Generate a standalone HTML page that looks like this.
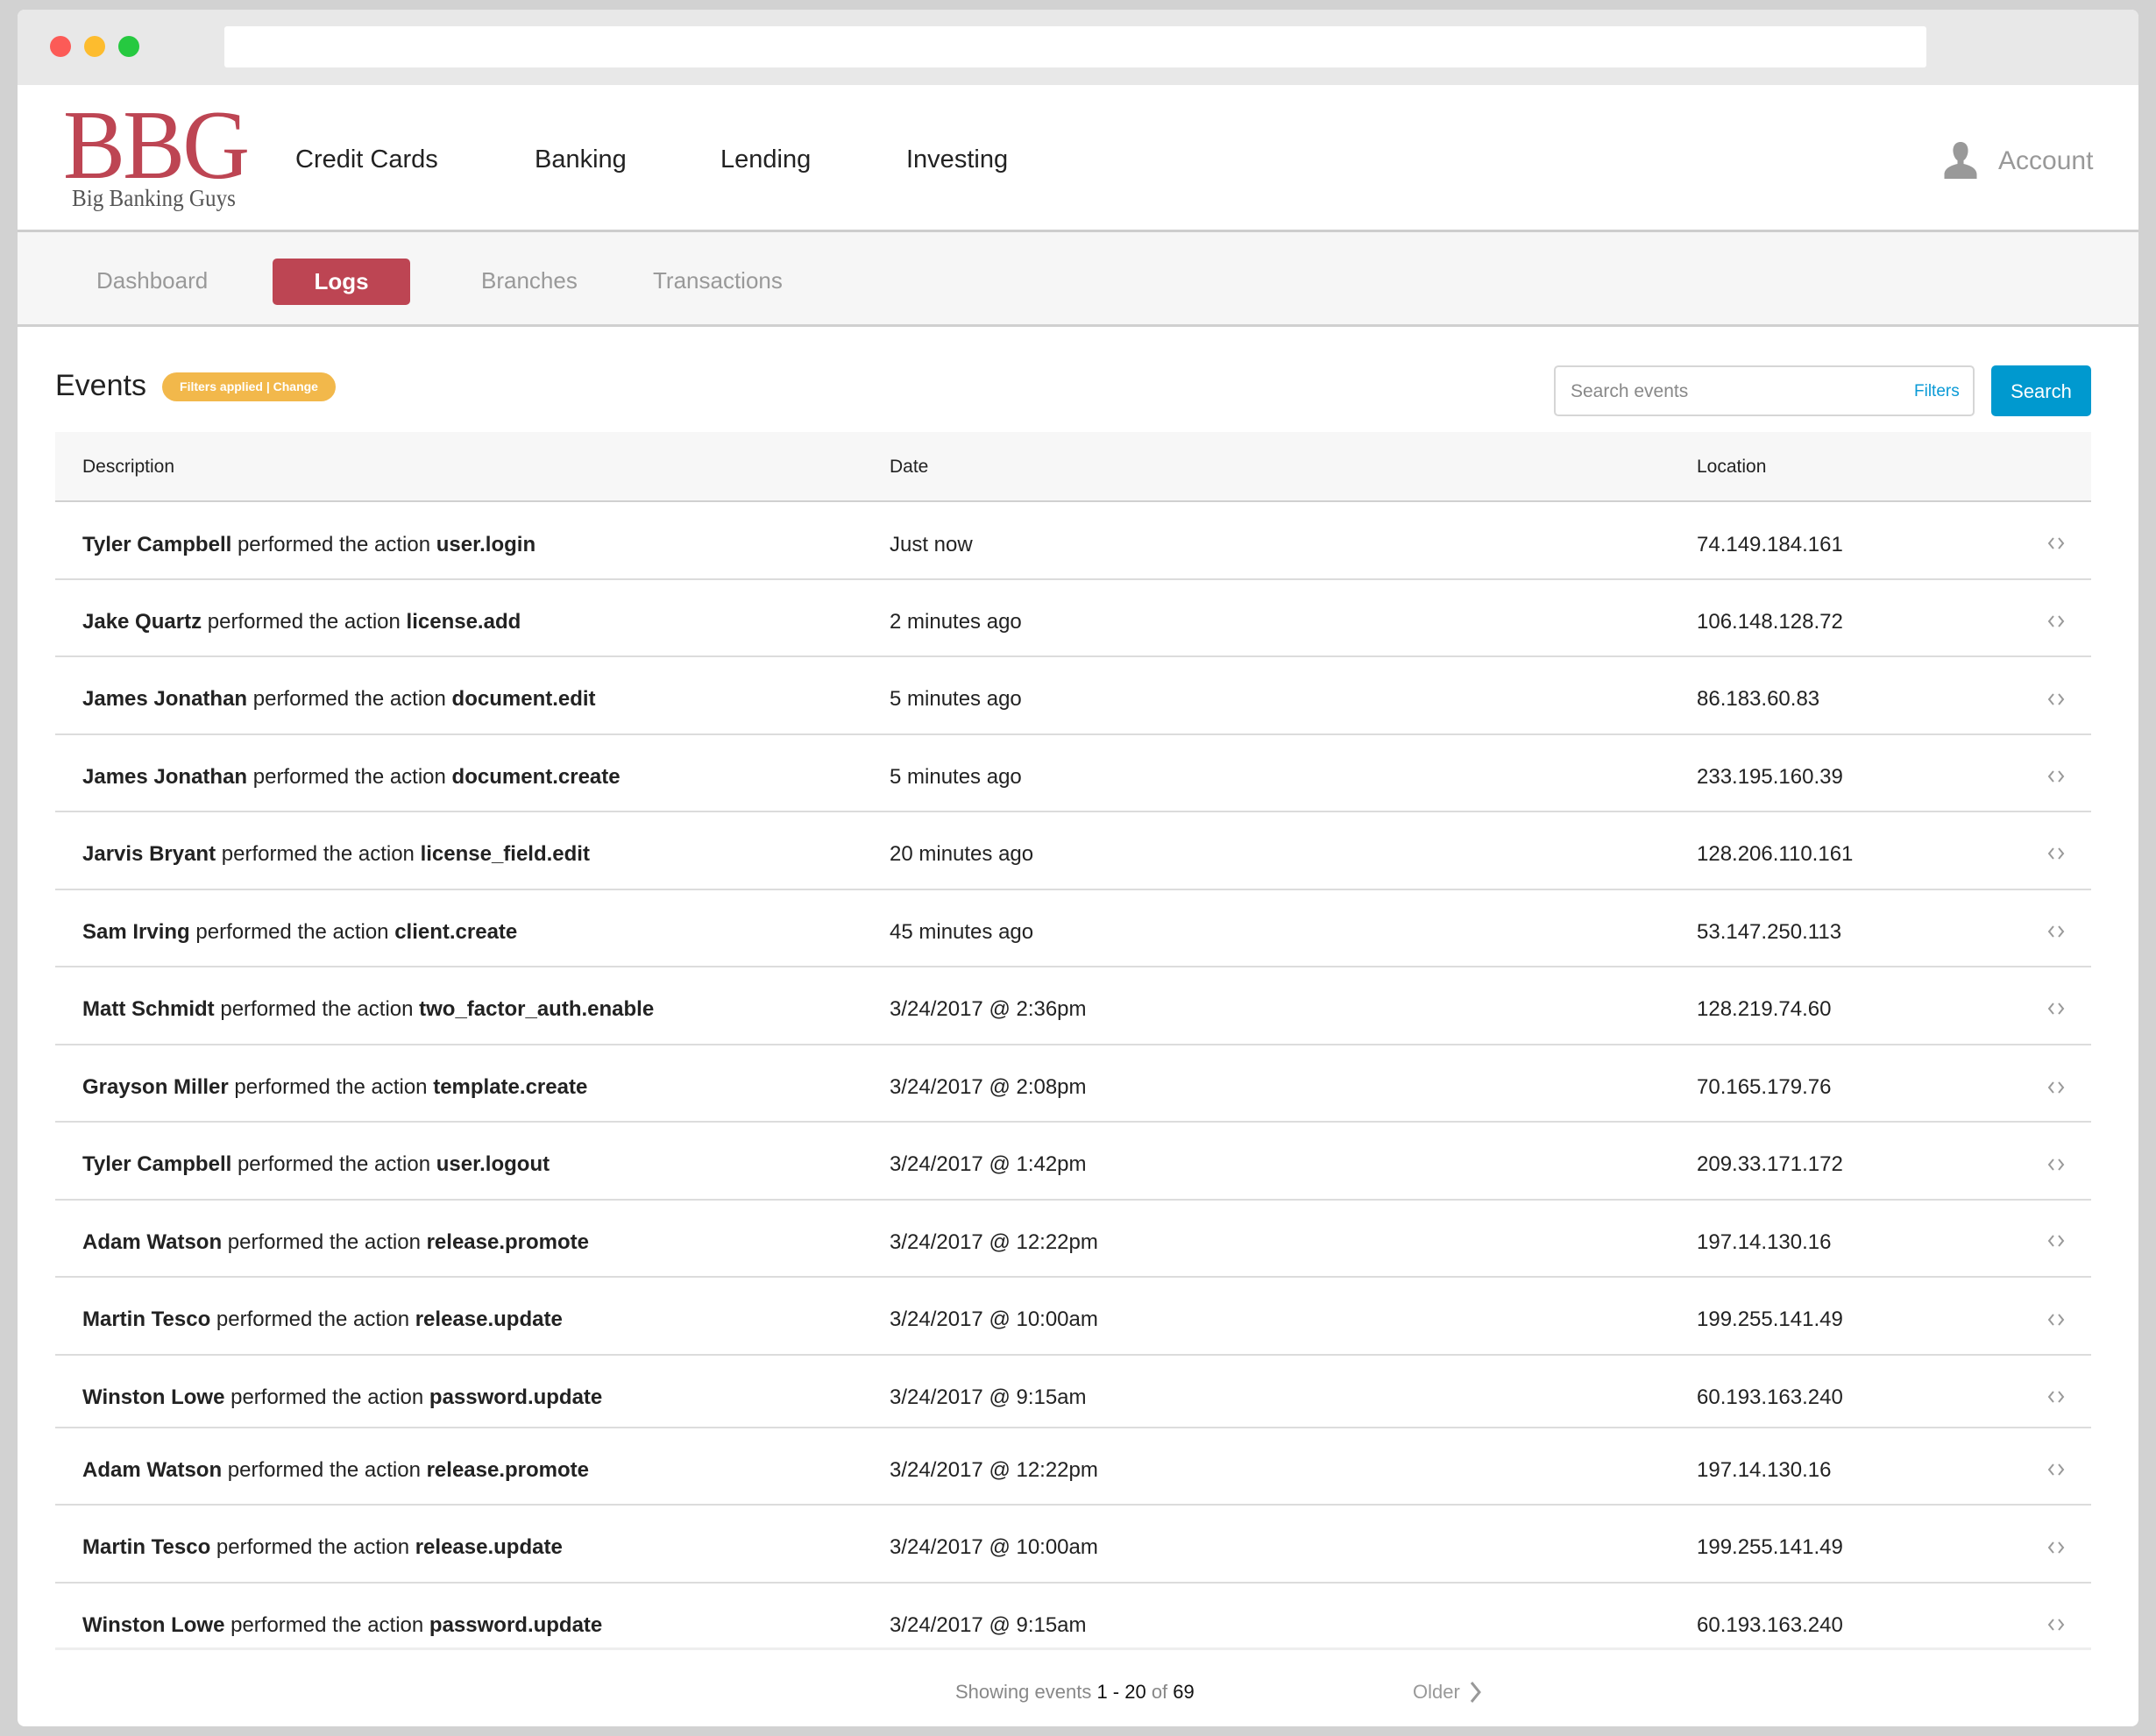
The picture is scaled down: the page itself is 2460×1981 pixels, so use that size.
<!DOCTYPE html>
<html><head><meta charset="utf-8"><style>
*{margin:0;padding:0;box-sizing:border-box}
body{width:2460px;height:1981px;background:#d2d2d2;position:relative;overflow:hidden;font-family:"Liberation Sans",Arial,sans-serif;color:#222}
.a{position:absolute;white-space:nowrap}
.win{position:absolute;left:20px;top:11px;width:2420px;height:1959px;background:#fff;border-radius:8px;overflow:hidden}
.tb{position:absolute;left:0;top:0;width:2420px;height:86px;background:#e8e8e8}
.dot{position:absolute;top:30px;width:24px;height:24px;border-radius:50%}
.nav{font-size:29px;color:#222;top:166px}
.sub{font-size:26px;color:#999;top:305px}
.row{position:absolute;left:63px;width:2323px;border-bottom:2px solid #dcdcdc}
.c{position:absolute;font-size:24px;line-height:30px;white-space:nowrap;color:#222}
.c b{font-weight:bold}
.ic{position:absolute;left:2272px;width:22px;height:16px}
</style></head><body>
<div class="win">
 <div class="tb">
  <div class="dot" style="left:37px;background:#fc5b57"></div>
  <div class="dot" style="left:76px;background:#fdbc2e"></div>
  <div class="dot" style="left:115px;background:#26c940"></div>
  <div class="a" style="left:236px;top:19px;width:1942px;height:47px;background:#fff;border-radius:3px"></div>
 </div>
</div>
<!-- header -->
<div class="a" style="left:72px;top:106px;font-family:'Liberation Serif',serif;font-size:112px;color:#bd4553;line-height:120px;transform:scaleX(0.95);transform-origin:left;letter-spacing:-3px">BBG</div>
<div class="a" style="left:82px;top:211px;font-family:'Liberation Serif',serif;font-size:27px;color:#555;transform:scaleX(0.93);transform-origin:left">Big Banking Guys</div>
<div class="a nav" style="left:337px">Credit Cards</div>
<div class="a nav" style="left:610px">Banking</div>
<div class="a nav" style="left:822px">Lending</div>
<div class="a nav" style="left:1034px">Investing</div>
<svg class="a" style="left:2216px;top:160px" width="42" height="46" viewBox="0 0 42 46"><path d="M21 2c-6 0-9 5-8.5 11 .4 5 3 9 5 10v4c-9 2-15 6-15 12v5h37v-5c0-6-6-10-15-12v-4c2-1 4.6-5 5-10C30 7 27 2 21 2z" fill="#999"/></svg>
<div class="a" style="left:2280px;top:167px;font-size:30px;color:#999">Account</div>
<div class="a" style="left:20px;top:262px;width:2420px;height:3px;background:#cdcdcd"></div>
<!-- subnav -->
<div class="a" style="left:20px;top:265px;width:2420px;height:108px;background:#f6f6f6;border-bottom:3px solid #d0d0d0"></div>
<div class="a sub" style="left:110px">Dashboard</div>
<div class="a" style="left:311px;top:295px;width:157px;height:53px;background:#bd4553;border-radius:5px;color:#fff;font-size:26px;font-weight:bold;text-align:center;line-height:53px">Logs</div>
<div class="a sub" style="left:549px">Branches</div>
<div class="a sub" style="left:745px">Transactions</div>
<!-- events -->
<div class="a" style="left:63px;top:421px;font-size:34px;color:#222">Events</div>
<div class="a" style="left:185px;top:425px;width:198px;height:33px;background:#f2b84b;border-radius:17px;color:#fff;font-size:14px;font-weight:bold;text-align:center;line-height:33px">Filters applied | Change</div>
<div class="a" style="left:1773px;top:417px;width:480px;height:58px;border:2px solid #d6d6d6;border-radius:5px;background:#fff"></div>
<div class="a" style="left:1792px;top:435px;font-size:21px;color:#888">Search events</div>
<div class="a" style="left:2184px;top:436px;font-size:19px;color:#0a9ad6">Filters</div>
<div class="a" style="left:2272px;top:417px;width:114px;height:58px;background:#0099cf;border-radius:5px;color:#fff;font-size:22px;text-align:center;line-height:60px">Search</div>
<!-- table header -->
<div class="a" style="left:63px;top:493px;width:2323px;height:80px;background:#f7f7f7;border-bottom:2px solid #d0d0d0"></div>
<div class="c" style="left:94px;top:518px;font-size:21px">Description</div>
<div class="c" style="left:1015px;top:518px;font-size:21px">Date</div>
<div class="c" style="left:1936px;top:518px;font-size:21px">Location</div>
<!-- footer -->
<div class="a" style="left:1090px;top:1918px;font-size:22px;color:#888">Showing events <span style="color:#111">1 - 20</span> of <span style="color:#111">69</span></div>
<div class="a" style="left:1612px;top:1918px;font-size:22px;color:#999">Older</div>
<svg class="a" style="left:1676px;top:1918px" width="14" height="26" viewBox="0 0 14 26"><path d="M3 2l9 11-9 11" stroke="#999" stroke-width="3" fill="none"/></svg>

<div class="row" style="top:573px;height:89px"><div class="c" style="left:31px;top:34px"><b>Tyler Campbell</b> performed the action <b>user.login</b></div><div class="c" style="left:952px;top:34px">Just now</div><div class="c" style="left:1873px;top:34px">74.149.184.161</div><svg class="ic" style="top:39px" viewBox="0 0 22 16"><path d="M8 2L3 8l5 6M14 2l5 6-5 6" stroke="#999" stroke-width="2" fill="none"/></svg></div>
<div class="row" style="top:662px;height:88px"><div class="c" style="left:31px;top:33px"><b>Jake Quartz</b> performed the action <b>license.add</b></div><div class="c" style="left:952px;top:33px">2 minutes ago</div><div class="c" style="left:1873px;top:33px">106.148.128.72</div><svg class="ic" style="top:39px" viewBox="0 0 22 16"><path d="M8 2L3 8l5 6M14 2l5 6-5 6" stroke="#999" stroke-width="2" fill="none"/></svg></div>
<div class="row" style="top:750px;height:89px"><div class="c" style="left:31px;top:33px"><b>James Jonathan</b> performed the action <b>document.edit</b></div><div class="c" style="left:952px;top:33px">5 minutes ago</div><div class="c" style="left:1873px;top:33px">86.183.60.83</div><svg class="ic" style="top:40px" viewBox="0 0 22 16"><path d="M8 2L3 8l5 6M14 2l5 6-5 6" stroke="#999" stroke-width="2" fill="none"/></svg></div>
<div class="row" style="top:839px;height:88px"><div class="c" style="left:31px;top:33px"><b>James Jonathan</b> performed the action <b>document.create</b></div><div class="c" style="left:952px;top:33px">5 minutes ago</div><div class="c" style="left:1873px;top:33px">233.195.160.39</div><svg class="ic" style="top:39px" viewBox="0 0 22 16"><path d="M8 2L3 8l5 6M14 2l5 6-5 6" stroke="#999" stroke-width="2" fill="none"/></svg></div>
<div class="row" style="top:927px;height:89px"><div class="c" style="left:31px;top:33px"><b>Jarvis Bryant</b> performed the action <b>license_field.edit</b></div><div class="c" style="left:952px;top:33px">20 minutes ago</div><div class="c" style="left:1873px;top:33px">128.206.110.161</div><svg class="ic" style="top:39px" viewBox="0 0 22 16"><path d="M8 2L3 8l5 6M14 2l5 6-5 6" stroke="#999" stroke-width="2" fill="none"/></svg></div>
<div class="row" style="top:1016px;height:88px"><div class="c" style="left:31px;top:33px"><b>Sam Irving</b> performed the action <b>client.create</b></div><div class="c" style="left:952px;top:33px">45 minutes ago</div><div class="c" style="left:1873px;top:33px">53.147.250.113</div><svg class="ic" style="top:39px" viewBox="0 0 22 16"><path d="M8 2L3 8l5 6M14 2l5 6-5 6" stroke="#999" stroke-width="2" fill="none"/></svg></div>
<div class="row" style="top:1104px;height:89px"><div class="c" style="left:31px;top:33px"><b>Matt Schmidt</b> performed the action <b>two_factor_auth.enable</b></div><div class="c" style="left:952px;top:33px">3/24/2017 @ 2:36pm</div><div class="c" style="left:1873px;top:33px">128.219.74.60</div><svg class="ic" style="top:39px" viewBox="0 0 22 16"><path d="M8 2L3 8l5 6M14 2l5 6-5 6" stroke="#999" stroke-width="2" fill="none"/></svg></div>
<div class="row" style="top:1193px;height:88px"><div class="c" style="left:31px;top:33px"><b>Grayson Miller</b> performed the action <b>template.create</b></div><div class="c" style="left:952px;top:33px">3/24/2017 @ 2:08pm</div><div class="c" style="left:1873px;top:33px">70.165.179.76</div><svg class="ic" style="top:40px" viewBox="0 0 22 16"><path d="M8 2L3 8l5 6M14 2l5 6-5 6" stroke="#999" stroke-width="2" fill="none"/></svg></div>
<div class="row" style="top:1281px;height:89px"><div class="c" style="left:31px;top:33px"><b>Tyler Campbell</b> performed the action <b>user.logout</b></div><div class="c" style="left:952px;top:33px">3/24/2017 @ 1:42pm</div><div class="c" style="left:1873px;top:33px">209.33.171.172</div><svg class="ic" style="top:40px" viewBox="0 0 22 16"><path d="M8 2L3 8l5 6M14 2l5 6-5 6" stroke="#999" stroke-width="2" fill="none"/></svg></div>
<div class="row" style="top:1370px;height:88px"><div class="c" style="left:31px;top:33px"><b>Adam Watson</b> performed the action <b>release.promote</b></div><div class="c" style="left:952px;top:33px">3/24/2017 @ 12:22pm</div><div class="c" style="left:1873px;top:33px">197.14.130.16</div><svg class="ic" style="top:38px" viewBox="0 0 22 16"><path d="M8 2L3 8l5 6M14 2l5 6-5 6" stroke="#999" stroke-width="2" fill="none"/></svg></div>
<div class="row" style="top:1458px;height:89px"><div class="c" style="left:31px;top:33px"><b>Martin Tesco</b> performed the action <b>release.update</b></div><div class="c" style="left:952px;top:33px">3/24/2017 @ 10:00am</div><div class="c" style="left:1873px;top:33px">199.255.141.49</div><svg class="ic" style="top:40px" viewBox="0 0 22 16"><path d="M8 2L3 8l5 6M14 2l5 6-5 6" stroke="#999" stroke-width="2" fill="none"/></svg></div>
<div class="row" style="top:1547px;height:83px"><div class="c" style="left:31px;top:33px"><b>Winston Lowe</b> performed the action <b>password.update</b></div><div class="c" style="left:952px;top:33px">3/24/2017 @ 9:15am</div><div class="c" style="left:1873px;top:33px">60.193.163.240</div><svg class="ic" style="top:39px" viewBox="0 0 22 16"><path d="M8 2L3 8l5 6M14 2l5 6-5 6" stroke="#999" stroke-width="2" fill="none"/></svg></div>
<div class="row" style="top:1630px;height:88px"><div class="c" style="left:31px;top:33px"><b>Adam Watson</b> performed the action <b>release.promote</b></div><div class="c" style="left:952px;top:33px">3/24/2017 @ 12:22pm</div><div class="c" style="left:1873px;top:33px">197.14.130.16</div><svg class="ic" style="top:39px" viewBox="0 0 22 16"><path d="M8 2L3 8l5 6M14 2l5 6-5 6" stroke="#999" stroke-width="2" fill="none"/></svg></div>
<div class="row" style="top:1718px;height:89px"><div class="c" style="left:31px;top:33px"><b>Martin Tesco</b> performed the action <b>release.update</b></div><div class="c" style="left:952px;top:33px">3/24/2017 @ 10:00am</div><div class="c" style="left:1873px;top:33px">199.255.141.49</div><svg class="ic" style="top:40px" viewBox="0 0 22 16"><path d="M8 2L3 8l5 6M14 2l5 6-5 6" stroke="#999" stroke-width="2" fill="none"/></svg></div>
<div class="row" style="top:1807px;height:76px;border-bottom-color:#eee;border-bottom-width:3px"><div class="c" style="left:31px;top:33px"><b>Winston Lowe</b> performed the action <b>password.update</b></div><div class="c" style="left:952px;top:33px">3/24/2017 @ 9:15am</div><div class="c" style="left:1873px;top:33px">60.193.163.240</div><svg class="ic" style="top:39px" viewBox="0 0 22 16"><path d="M8 2L3 8l5 6M14 2l5 6-5 6" stroke="#999" stroke-width="2" fill="none"/></svg></div>
</body></html>
